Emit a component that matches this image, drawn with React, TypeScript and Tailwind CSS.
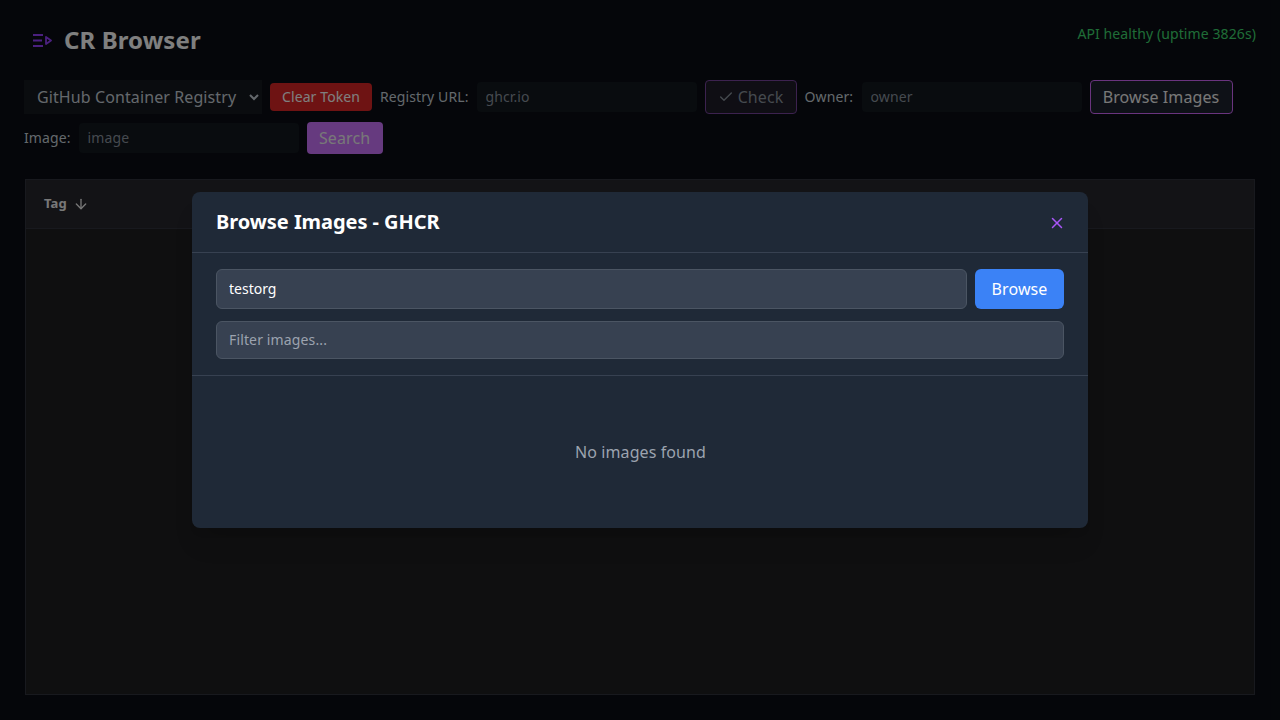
import { ArrowDown, Check, X } from "lucide-react";

const field =
  "h-[30px] w-[220px] rounded bg-[#12181e] px-[9px] pb-px text-sm text-[#c9d1d9] outline-none placeholder:text-[#8b949e]";

function Logo() {
  return (
    <svg width="19" height="13" viewBox="0 0 19 13" fill="none" stroke="#9640ff" strokeWidth="1.8" strokeLinejoin="round" className="shrink-0">
      <path d="M0 1h10M0 6.5h9M0 12h10" />
      <path d="M13 3 18 6.5 13 10z" />
    </svg>
  );
}

export default function App() {
  return (
    <div className="relative h-[720px] overflow-hidden bg-[#0a0d14] font-['Noto_Sans',sans-serif] tracking-[0.1px] text-[#f0f0f0]">
      <div className="flex h-full flex-col px-6 pt-[24px]">
        {/* Header */}
        <div className="flex h-[32px] items-start justify-between">
          <div className="flex items-center gap-3 pl-[9px]">
            <Logo />
            <h1 className="text-2xl leading-[32px] font-bold text-white">CR Browser</h1>
          </div>
          <span className="text-sm leading-[20px] text-[#3fd96f]">API healthy (uptime 3826s)</span>
        </div>

        {/* Toolbar */}
        <div className="mt-[24px] flex flex-wrap items-center gap-x-2 gap-y-2">
          <select className="h-[34px] w-[238px] bg-[#14181e] pl-[9px] text-base tracking-[0.1px] text-[#c9d1d9] outline-none">
            <option>GitHub Container Registry</option>
          </select>
          <button className="h-[28px] rounded bg-[#dc2626] px-3 text-sm text-white">Clear Token</button>
          <label className="text-sm text-[#c9d1d9]">Registry URL:</label>
          <input className={field} placeholder="ghcr.io" />
          <button className="flex h-[34px] w-[92px] items-center justify-center gap-1 rounded border border-[#78449f] bg-[#1e1c28] text-base text-[#8b949e]">
            <Check size={16} />
            Check
          </button>
          <label className="w-[49px] text-sm text-[#c9d1d9]">Owner:</label>
          <input className={field} placeholder="owner" />
          <button className="h-[34px] w-[143px] rounded border border-[#d468ff] bg-[#1c222e] text-base">Browse Images</button>
          <label className="text-sm text-[#c9d1d9]">Image:</label>
          <input className={field} placeholder="image" />
          <button className="h-[32px] w-[76px] rounded bg-[#cc74ff] text-base">Search</button>
        </div>

        {/* Table */}
        <div className="mt-[25px] mb-[25px] ml-px w-[1230px] flex-1 border border-[#30323c] bg-[#1e1e20]">
          <div className="flex h-[49px] items-center gap-1.5 border-b border-[#30323c] bg-[#26262c] px-[18px] text-[13px] font-bold">
            <span>Tag</span>
            <ArrowDown size={16} />
          </div>
        </div>
      </div>

      {/* Dialog */}
      <div className="absolute inset-0 bg-black/50" />
      <div className="absolute top-[192px] left-[192px] w-[896px] rounded-lg bg-[#1f2937] shadow-xl">
        <div className="flex h-[61px] items-center justify-between border-b border-[#374151] px-6">
          <h2 className="text-xl font-bold tracking-[-0.05px] text-white">Browse Images - GHCR</h2>
          <X size={18} className="-mr-0.5 mt-px text-[#a855f7]" />
        </div>
        <div className="flex flex-col gap-3 border-b border-[#374151] px-6 py-4">
          <div className="flex gap-2">
            <input
              className="h-10 flex-1 rounded-md border border-[#4b5563] bg-[#374151] px-3 pb-0.5 text-sm tracking-normal text-white outline-none"
              defaultValue="testorg"
            />
            <button className="h-10 w-[89px] rounded-md bg-[#3b82f6] text-base text-white">Browse</button>
          </div>
          <input
            className="h-[38px] rounded-md border border-[#4b5563] bg-[#374151] px-3 pb-0.5 text-sm tracking-[0.14px] text-white outline-none placeholder:text-[#9ca3af]"
            placeholder="Filter images..."
          />
        </div>
        <div className="flex h-[152px] items-center justify-center pl-px text-base text-[#9ca3af]">No images found</div>
      </div>
    </div>
  );
}
